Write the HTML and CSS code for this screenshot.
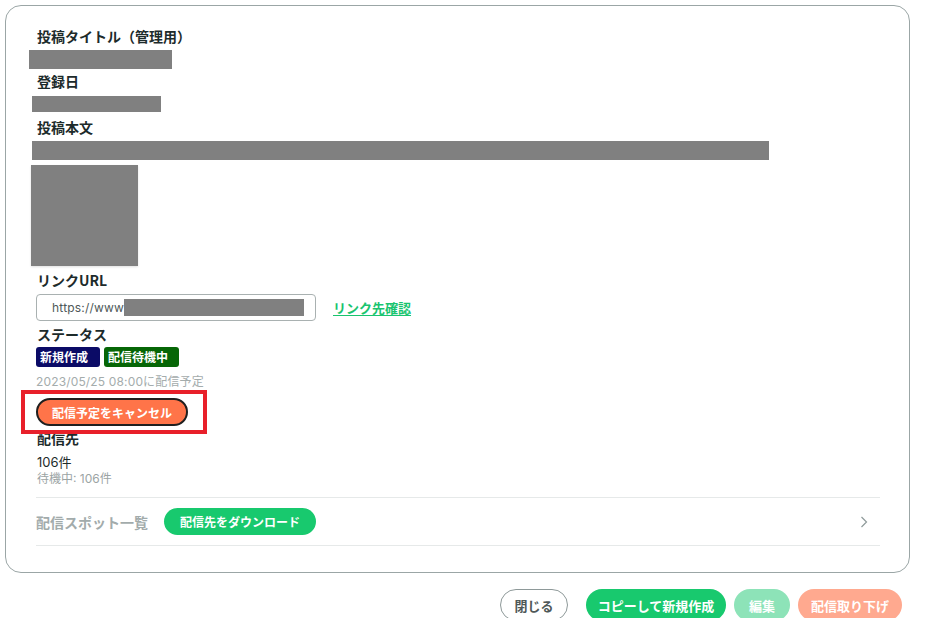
FILE: index.html
```html
<!DOCTYPE html>
<html lang="ja">
<head>
<meta charset="utf-8">
<title>投稿詳細</title>
<link rel="stylesheet" href="styles.css">
</head>
<body>
<div class="card">
  <div class="label">投稿タイトル（管理用）</div>
  <div class="redact r1"></div>
  <div class="label">登録日</div>
  <div class="redact r2"></div>
  <div class="label">投稿本文</div>
  <div class="redact r3"></div>
  <div class="image"></div>
  <div class="label">リンクURL</div>
  <div class="url-row">
    <div class="input"><span class="url-text">https://www</span><span class="redact r4"></span></div>
    <a class="link" href="#">リンク先確認</a>
  </div>
  <div class="label">ステータス</div>
  <div class="badges">
    <span class="badge navy">新規作成</span>
    <span class="badge green">配信待機中</span>
  </div>
  <div class="note">2023/05/25 08:00に配信予定</div>
  <div class="cancel-wrap">
    <button class="btn cancel">配信予定をキャンセル</button>
    <span class="highlight"></span>
  </div>
  <div class="label">配信先</div>
  <div class="count">106件</div>
  <div class="sub">待機中: 106件</div>
  <div class="spot-row">
    <span class="spot-title">配信スポット一覧</span>
    <button class="btn download">配信先をダウンロード</button>
    <svg class="chev" width="8" height="12" viewBox="0 0 8 12"><path d="M1.5 1 L6.5 6 L1.5 11" fill="none" stroke="#8e9a9a" stroke-width="1.2"/></svg>
  </div>
</div>
<div class="footer">
  <button class="btn close">閉じる</button>
  <button class="btn copy">コピーして新規作成</button>
  <button class="btn edit">編集</button>
  <button class="btn withdraw">配信取り下げ</button>
</div>
</body>
</html>
```
FILE: styles.css
```css
* { box-sizing: border-box; }
body {
  margin: 0;
  background: #fff;
  font-family: "Inter", "Noto Sans CJK JP", sans-serif;
  color: #1d2b2b;
  width: 928px;
  height: 618px;
  overflow: hidden;
}
.card {
  margin: 5px 0 0 5px;
  width: 905px;
  height: 568px;
  border: 1px solid #9ba6a6;
  border-radius: 16px;
  padding: 20px 29px 0 30px;
  display: flex;
  flex-direction: column;
  align-items: flex-start;
}
.label {
  font-family: "Noto Sans CJK JP", sans-serif;
  font-weight: 700;
  font-size: 14px;
  line-height: 20px;
  height: 20px;
  margin-left: 1px;
}
.redact { background: #808080; display: block; }
.r1 { width: 143px; height: 19px; margin: 4px 0 2px -7px; }
.r2 { width: 129px; height: 16px; margin: 5px 0 5px -4px; }
.r3 { width: 737px; height: 19px; margin: 4px 0 5px -4px; }
.image {
  width: 107px; height: 101px;
  background: #808080;
  margin: 0 0 4px -5px;
  box-shadow: 0 1px 2px rgba(0,0,0,0.12);
}
.url-row {
  display: flex;
  align-items: center;
  gap: 17px;
  margin: 4px 0 3px;
}
.input {
  width: 280px; height: 27px;
  border: 1px solid #a9b1b1;
  border-radius: 4px;
  display: flex;
  align-items: center;
  padding-left: 15px;
}
.url-text {
  font-size: 12px;
  color: #4e5858;
  letter-spacing: 0.2px;
}
.r4 { width: 180px; height: 17px; margin-left: 0; }
.link {
  font-family: "Noto Sans CJK JP", sans-serif;
  font-weight: 700;
  font-size: 13px;
  color: #19c46f;
  text-decoration: underline;
  text-underline-offset: 2px;
}
.badges { display: flex; gap: 4px; margin-top: 3px; }
.badge {
  font-family: "Noto Sans CJK JP", sans-serif;
  font-weight: 700;
  font-size: 12px;
  line-height: 20px;
  height: 20px;
  color: #fff;
  padding: 0 4px;
  border-radius: 3px;
}
.badge.navy { background: #0b0b66; width: 64px; }
.badge.green { background: #066606; width: 75px; }
.note {
  font-size: 12px;
  line-height: 16px;
  color: #a4acac;
  margin-top: 7px;
  letter-spacing: 0.15px;
}
.cancel-wrap { position: relative; margin: 8px 0 2px; }
.btn {
  font-family: "Noto Sans CJK JP", sans-serif;
  font-weight: 700;
  color: #fff;
  border: none;
  border-radius: 999px;
  cursor: pointer;
  padding: 0;
}
.cancel {
  width: 152px; height: 28px;
  font-size: 12px;
  background: #ff7449;
  border: 2px solid #1f1f1f;
  display: block;
}
.highlight {
  position: absolute;
  left: -15px; top: -8px;
  width: 186px; height: 44px;
  border: 4px solid #e8202a;
  pointer-events: none;
}
.count {
  font-size: 13px;
  line-height: 18px;
  margin-top: 5px;
  margin-left: 1px;
}
.sub {
  font-size: 12px;
  line-height: 16px;
  color: #9ba4a4;
  margin-left: 1px;
}
.spot-row {
  margin-top: 10px;
  width: 844px;
  height: 49px;
  border-top: 1px solid #e6e9e9;
  border-bottom: 1px solid #e6e9e9;
  display: flex;
  align-items: center;
  gap: 16px;
}
.spot-title {
  font-family: "Noto Sans CJK JP", sans-serif;
  font-weight: 700;
  font-size: 14px;
  color: #a2abab;
}
.download {
  width: 152px; height: 27px;
  font-size: 12px;
  background: #18c96e;
}
.chev { margin-left: auto; margin-right: 12px; }
.footer {
  display: flex;
  justify-content: flex-end;
  gap: 8px;
  padding-right: 26px;
  margin-top: 16px;
}
.footer .btn { height: 32px; font-size: 13px; }
.close {
  width: 68px;
  background: #fff;
  color: #4f5858;
  border: 1px solid #8e9999;
  margin-right: 10px;
}
.copy { width: 140px; background: #18c96e; }
.edit { width: 56px; background: #8de3b8; }
.withdraw { width: 104px; background: #ffa98f; }
```
